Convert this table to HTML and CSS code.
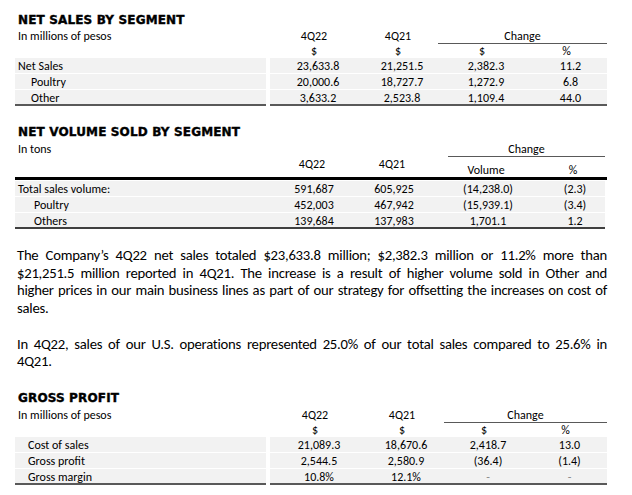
FILE: index.html
```html
<!DOCTYPE html>
<html lang="en">
<head>
    <meta charset="UTF-8">
    <title>4Q22 Net Sales</title>
    <link rel="stylesheet" href="styles.css">
</head>
<body>
    <h2 class="title t-first">NET SALES BY SEGMENT</h2>
    <div class="tbl sales">
        <div class="tr head-a">
            <div class="td lbl">In millions of pesos</div>
            <div class="td">4Q22</div>
            <div class="td">4Q21</div>
            <div class="td change">Change</div>
        </div>
        <div class="tr head-b">
            <div class="td lbl"></div>
            <div class="td">$</div>
            <div class="td">$</div>
            <div class="td">$</div>
            <div class="td">%</div>
        </div>
        <div class="tr row">
            <div class="td lbl">Net Sales</div>
            <div class="td num">23,633.8</div>
            <div class="td num">21,251.5</div>
            <div class="td num">2,382.3</div>
            <div class="td num">11.2</div>
        </div>
        <div class="tr row">
            <div class="td lbl sub">Poultry</div>
            <div class="td num">20,000.6</div>
            <div class="td num">18,727.7</div>
            <div class="td num">1,272.9</div>
            <div class="td num">6.8</div>
        </div>
        <div class="tr row last">
            <div class="td lbl sub">Other</div>
            <div class="td num">3,633.2</div>
            <div class="td num">2,523.8</div>
            <div class="td num">1,109.4</div>
            <div class="td num">44.0</div>
        </div>
    </div>

    <h2 class="title t-second">NET VOLUME SOLD BY SEGMENT</h2>
    <div class="tbl volume">
        <div class="tr head-a">
            <div class="td lbl">In tons</div>
            <div class="td"></div>
            <div class="td"></div>
            <div class="td change">Change</div>
        </div>
        <div class="tr head-b">
            <div class="td lbl"></div>
            <div class="td top">4Q22</div>
            <div class="td top">4Q21</div>
            <div class="td">Volume</div>
            <div class="td">%</div>
        </div>
        <div class="tr row">
            <div class="td lbl">Total sales volume:</div>
            <div class="td num">591,687</div>
            <div class="td num">605,925</div>
            <div class="td num">(14,238.0)</div>
            <div class="td num">(2.3)</div>
        </div>
        <div class="tr row">
            <div class="td lbl sub">Poultry</div>
            <div class="td num">452,003</div>
            <div class="td num">467,942</div>
            <div class="td num">(15,939.1)</div>
            <div class="td num">(3.4)</div>
        </div>
        <div class="tr row last">
            <div class="td lbl sub">Others</div>
            <div class="td num">139,684</div>
            <div class="td num">137,983</div>
            <div class="td num">1,701.1</div>
            <div class="td num">1.2</div>
        </div>
    </div>

    <div class="text">
        <p>
            <span class="ln">The Company’s 4Q22 net sales totaled $23,633.8 million; $2,382.3 million or 11.2% more than</span>
            <span class="ln">$21,251.5 million reported in 4Q21. The increase is a result of higher volume sold in Other and</span>
            <span class="ln">higher prices in our main business lines as part of our strategy for offsetting the increases on cost of</span>
            <span class="ln end">sales.</span>
        </p>
        <p>
            <span class="ln">In 4Q22, sales of our U.S. operations represented 25.0% of our total sales compared to 25.6% in</span>
            <span class="ln end">4Q21.</span>
        </p>
    </div>

    <h2 class="title t-third">GROSS PROFIT</h2>
    <div class="tbl gross">
        <div class="tr head-a">
            <div class="td lbl">In millions of pesos</div>
            <div class="td">4Q22</div>
            <div class="td">4Q21</div>
            <div class="td change">Change</div>
        </div>
        <div class="tr head-b">
            <div class="td lbl"></div>
            <div class="td">$</div>
            <div class="td">$</div>
            <div class="td">$</div>
            <div class="td">%</div>
        </div>
        <div class="tr row">
            <div class="td lbl">Cost of sales</div>
            <div class="td num">21,089.3</div>
            <div class="td num">18,670.6</div>
            <div class="td num">2,418.7</div>
            <div class="td num">13.0</div>
        </div>
        <div class="tr row">
            <div class="td lbl">Gross profit</div>
            <div class="td num">2,544.5</div>
            <div class="td num">2,580.9</div>
            <div class="td num">(36.4)</div>
            <div class="td num">(1.4)</div>
        </div>
        <div class="tr row last">
            <div class="td lbl">Gross margin</div>
            <div class="td num">10.8%</div>
            <div class="td num">12.1%</div>
            <div class="td num dash">-</div>
            <div class="td num dash">-</div>
        </div>
    </div>
</body>
</html>
```

FILE: styles.css
```css
body {
    margin: 0;
    padding: 0 25px 0 15px;
    background: #fff;
    color: #000;
    font-family: Carlito, Lato, 'Liberation Sans', sans-serif;
}
.title {
    margin: 0 0 0 3px;
    font-family: 'DejaVu Sans', sans-serif;
    font-size: 12px;
    line-height: 14px;
    font-weight: bold;
    letter-spacing: 0.15px;
    -webkit-text-stroke: 0.4px #000;
}
.t-first { margin-top: 13px; margin-bottom: 1px; }
.t-second { margin-top: 19px; margin-bottom: 2px; }
.t-third { margin-top: 20px; margin-bottom: 2px; }

/* tables */
.tbl {
    font-size: 12px;
    line-height: 14px;
}
.tr {
    display: grid;
}
.sales .tr { grid-template-columns: 255px 88px 80px 88px 81px; }
.volume .tr { grid-template-columns: 256px 82px 78px 110px 64px; }
.gross .tr { grid-template-columns: 255px 90px 84px 80px 83px; }
.td {
    text-align: center;
    white-space: nowrap;
}
.td.lbl {
    text-align: left;
    padding-left: 3px;
}
.sales .td.lbl,
.gross .td.lbl {
    margin-right: 4px;
}
.td.change {
    grid-column: span 2;
    border-bottom: 1px solid #595959;
}
.volume .td.change {
    margin-left: 17px;
}
.head-a {
    height: 16px;
}
.head-a .td {
    padding-top: 1px;
}
.head-b {
    height: 13px;
}
.sales .head-b .td,
.gross .head-b .td {
    border-bottom: 2px solid #595959;
}
.volume .head-b {
    height: 20px;
    border-bottom: 3px solid #000;
    align-items: end;
}
.volume .td.top { align-self: start; }

.row {
    margin-top: 1px;
}
.row .td {
    background: #f2f2f2;
    height: 15px;
    line-height: 17px;
}
.row .num { padding-left: 8px; }
.volume .row .num { padding-left: 4px; }
.row.last .td { border-bottom: 2px solid #595959; height: 14px; }
.volume .row.last .td { border-bottom-color: #404040; }
.row .sub { padding-left: 16px; }
.volume .row .lbl { padding-left: 3px; }
.volume .row .sub { padding-left: 19px; }
.gross .row .lbl { padding-left: 13px; }
.dash { color: #8c8c8c; }

/* paragraphs */
.text {
    margin-top: 18px;
    padding-left: 2px;
    font-size: 14.7px;
    line-height: 17.7px;
    letter-spacing: -0.25px;
}
.text p {
    margin: 0 0 17.7px 0;
}
.text p:last-child { margin-bottom: 0; }
.ln {
    display: block;
    text-align: justify;
    text-align-last: justify;
}
.ln.end { text-align-last: left; }
```
